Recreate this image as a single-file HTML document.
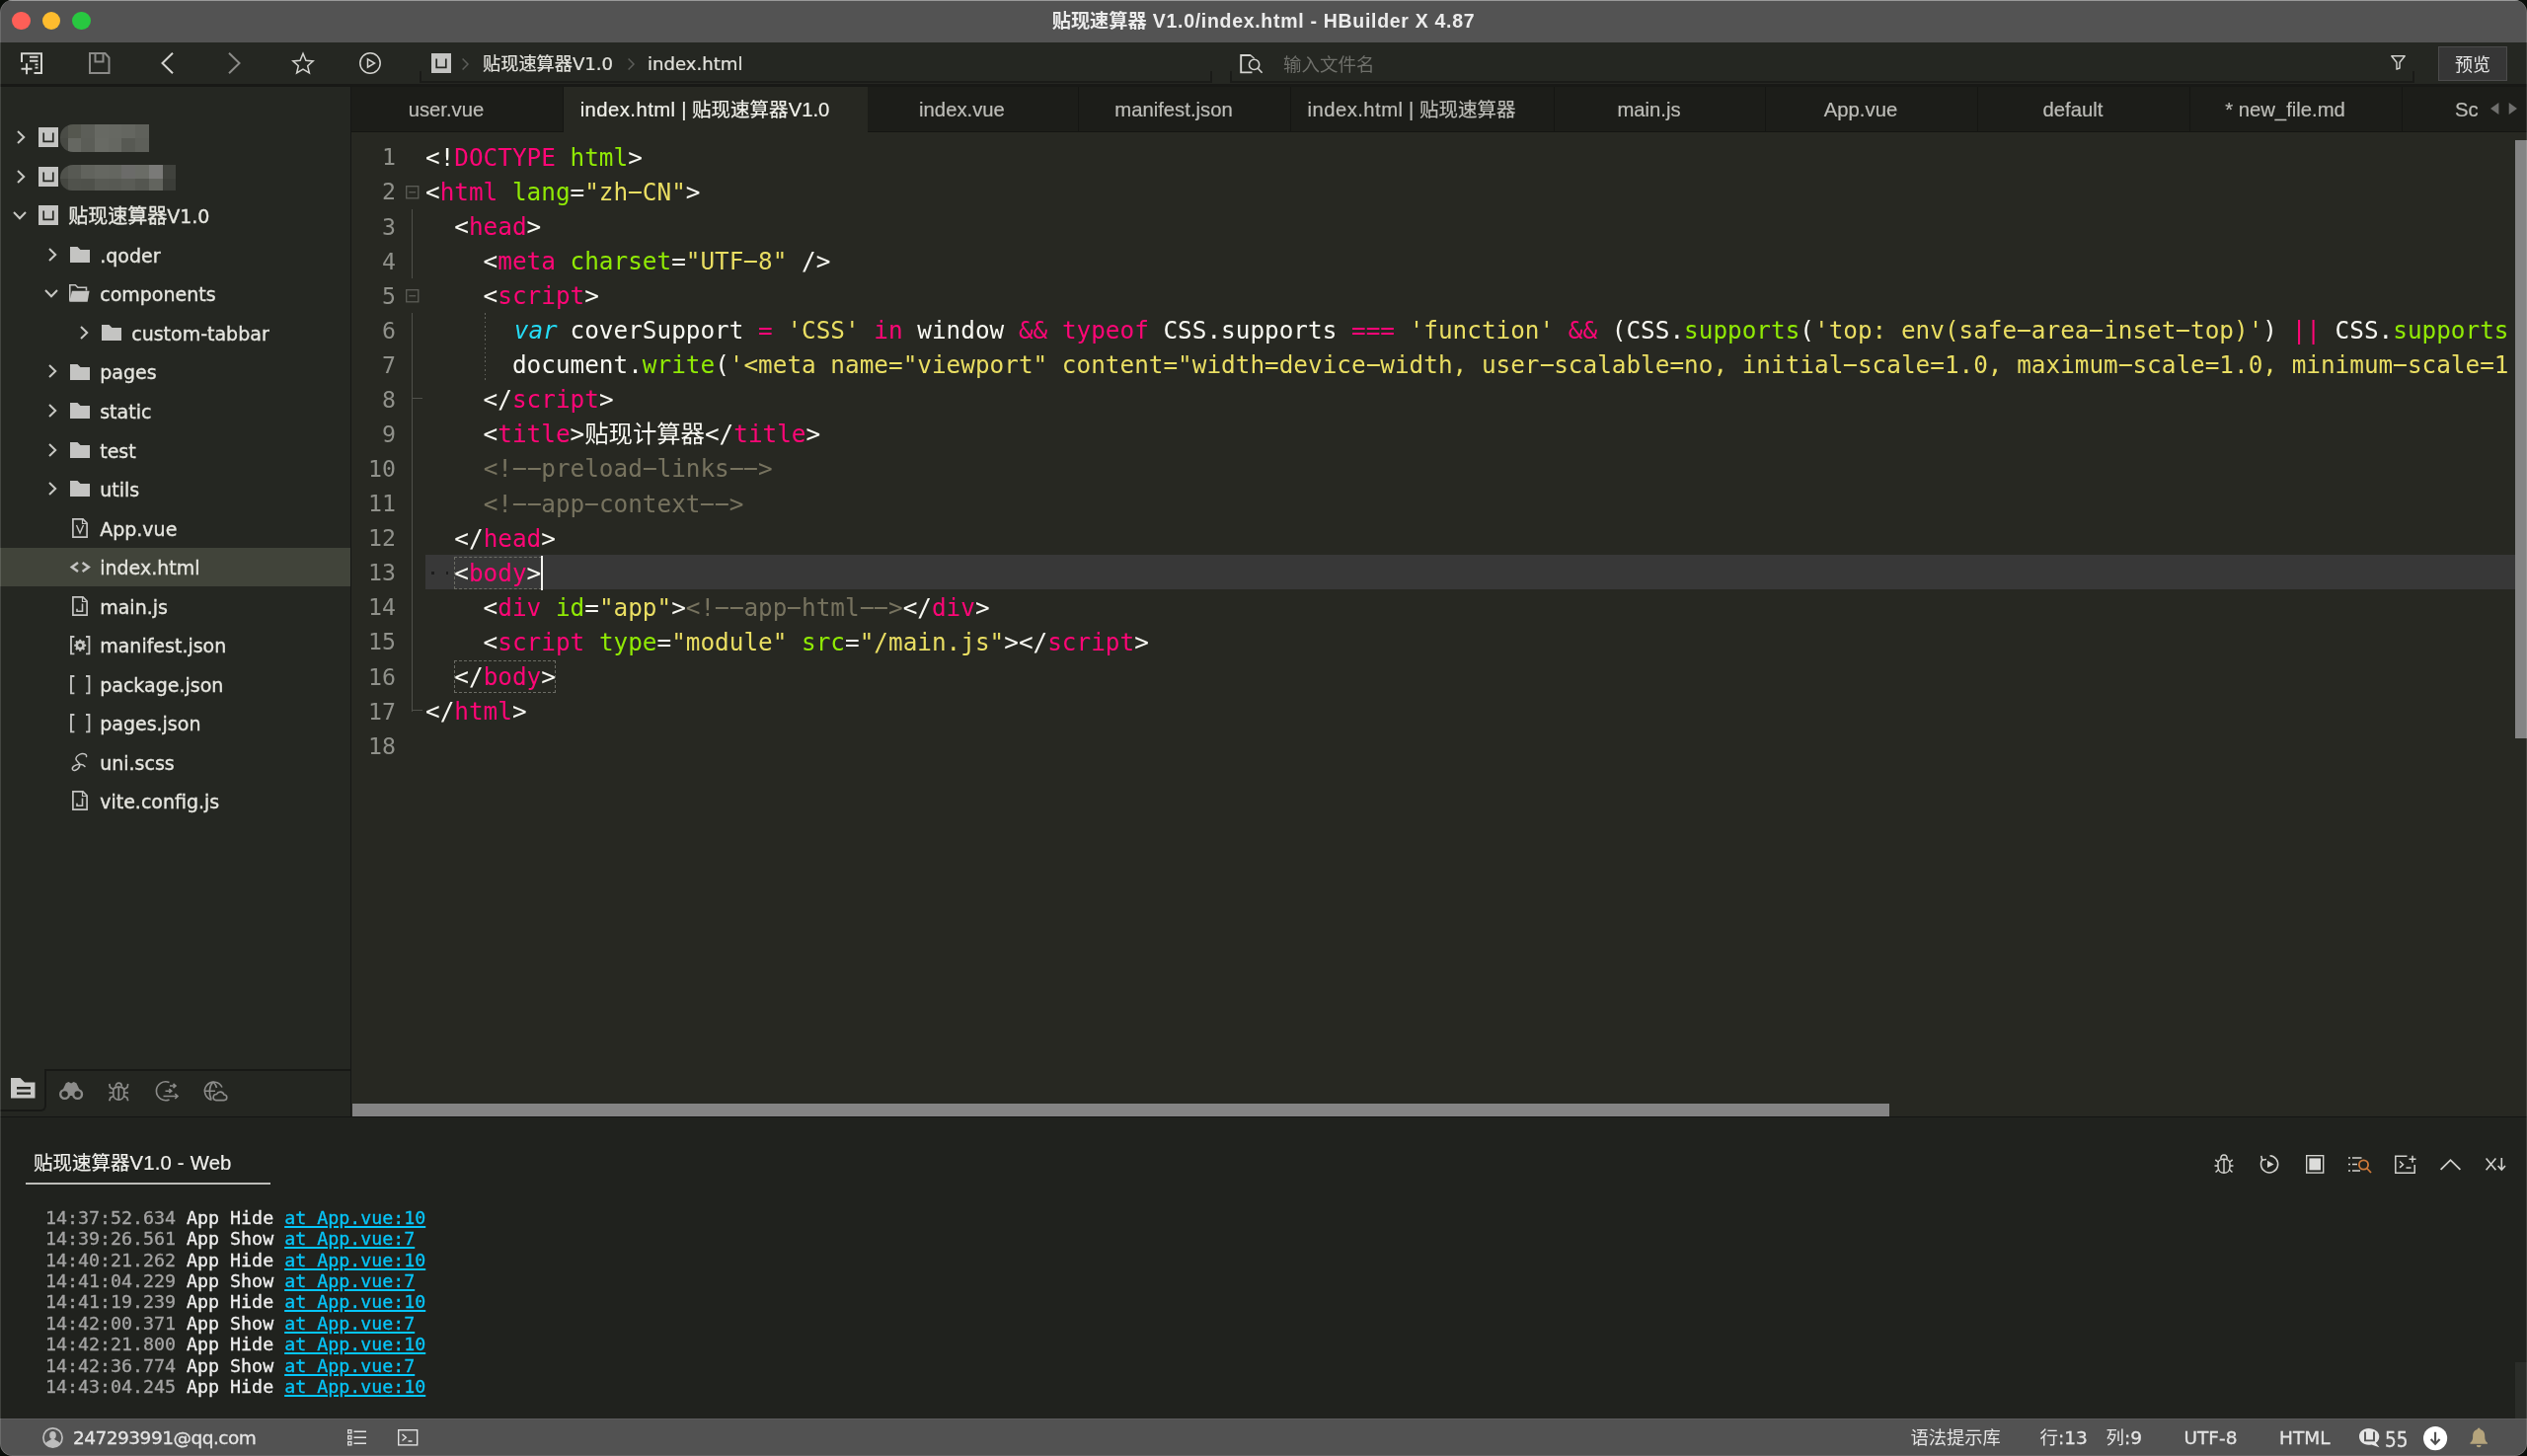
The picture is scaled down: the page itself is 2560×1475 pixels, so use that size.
<!DOCTYPE html>
<html lang="zh-CN"><head><meta charset="utf-8"><title>HBuilder X</title>
<style>
*{box-sizing:border-box;margin:0;padding:0}
html,body{width:2560px;height:1475px;overflow:hidden;background:#0b0f0b}
body{position:relative;font-family:"DejaVu Sans","Noto Sans CJK SC",sans-serif;color:#d8d8d2;-webkit-font-smoothing:antialiased}
.abs{position:absolute}
#win{position:absolute;left:0;top:0;width:2560px;height:1475px;border-radius:12.5px;overflow:hidden;background:#272822;will-change:transform}
#title{position:absolute;left:0;top:0;width:2560px;height:43px;background:#535353;border-top:1.5px solid #9a9a9a}
#title .t{position:absolute;left:0;width:2560px;top:7px;text-align:center;font:bold 19.5px/26px "Liberation Sans","Noto Sans CJK SC",sans-serif;color:#ececec;letter-spacing:0.7px;white-space:pre}
.tl{position:absolute;top:10.7px;width:18.6px;height:18.6px;border-radius:50%}
#toolbar{position:absolute;left:0;top:43px;width:2560px;height:42px;background:#252722}
#tbline{position:absolute;left:0;top:85px;width:2560px;height:3px;background:#181916}
#sidebar{position:absolute;left:0;top:88px;width:355px;height:1043px;background:#252722}
#sidesep{position:absolute;left:355px;top:88px;width:2px;height:1043px;background:linear-gradient(to right,#161716 1px,#21221e 1px)}
#tabs{position:absolute;left:356px;top:88px;width:2204px;height:46px;background:#1c1d19}
.tab{position:absolute;top:0;height:46px;border-right:1.5px solid #151613;border-bottom:1.5px solid #151613;font:20.3px/46px "Liberation Sans","Noto Sans CJK SC",sans-serif;color:#bdbdb8;text-align:center;white-space:pre;padding-right:22px;-webkit-text-stroke:.2px}
.tab .z{font-size:19.5px}
.tab.act{background:#272822;border:none;color:#f0f0ea;height:46px}
#editor{position:absolute;left:356px;top:134px;width:2204px;height:997px;background:#272822;overflow:hidden}
.ln{position:absolute;left:0;width:45px;text-align:right;font:23.2px/35px "DejaVu Sans Mono",monospace;color:#90918b;height:35px;margin-top:-.4px}
.cl{position:absolute;left:75px;height:35px;font:24.355px/35px "DejaVu Sans Mono","Noto Sans CJK SC",monospace;color:#f8f8f2;white-space:pre}
.k{color:#ff0677}.a{color:#90ea05}.s{color:#eade62}.c{color:#77735f}.v{color:#25dcf6;font-style:italic;position:relative;left:1.8px}
.h{display:inline-block;transform:translateY(-.6px) scaleX(2.1)}
#console{position:absolute;left:0;top:1131px;width:2560px;height:306px;background:#20221e;box-shadow:inset 0 1px 0 #141514}
.cline{position:absolute;left:46px;height:22px;font:18.3px/22px "DejaVu Sans Mono",monospace;white-space:pre;color:#f0f0f0;-webkit-text-stroke:.3px}
.cline .ts{color:#a4a4a4}.cline .lk{color:#06c6fa;text-decoration:underline;text-decoration-thickness:1.5px;text-underline-offset:2.4px}
#status{position:absolute;left:0;top:1437px;width:2560px;height:38px;background:#525252;box-shadow:inset 0 1px 0 #5c5c5c;font:18.5px/38px "DejaVu Sans","Noto Sans CJK SC",sans-serif;color:#e4e4e4}
#status span{position:absolute;top:.8px;white-space:pre;-webkit-text-stroke:.3px #e4e4e4}
.row{position:absolute;left:0;width:355px;height:39px}
.row .tx{position:absolute;top:1.5px;margin-left:-1.3px;font:19px/39px "DejaVu Sans","Noto Sans CJK SC",sans-serif;color:#e6e6e0;white-space:pre;-webkit-text-stroke:0.35px #e6e6e0}
.row .cj{font-size:20px}
.row.sel{background:#41443a}
svg{position:absolute;overflow:visible}
#frame{position:absolute;left:0;top:0;width:2560px;height:1475px;border-radius:12.5px;box-shadow:inset 1px 0 0 rgba(255,255,255,.14),inset -1px 0 0 rgba(255,255,255,.14),inset 0 -1px 0 rgba(255,255,255,.10);pointer-events:none}
</style></head>
<body><div id="win">
<div id="title"><div class="tl" style="left:12px;background:#fe5f57"></div><div class="tl" style="left:42.6px;background:#febc2e"></div><div class="tl" style="left:73px;background:#28c840"></div><div class="t"><span style="font-size:19.2px;letter-spacing:0">贴现速算器</span> V1.0/index.html - HBuilder X 4.87</div></div>
<div id="toolbar"><div class="abs" style="left:0;top:0;width:2560px;height:42px">
<svg style="left:21px;top:10px" width="22" height="22" viewBox="0 0 22 22" fill="none" stroke="#d4d4d0" stroke-width="2"><path d="M1 10V1.2H21V21H13.5"/><path d="M9 4.8H17.5M9 8.8H17.5" stroke-width="2"/><path d="M14.5 12.3H17.5M14.5 15.6H17.5" stroke-width="1.8"/><path d="M0.5 16.8H11.5M6 11.3V22.3" stroke-width="1.9"/></svg>
<svg style="left:90px;top:10px" width="22" height="22" viewBox="0 0 22 22" fill="none" stroke="#8b8b88" stroke-width="2"><path d="M1 1H16.5L20.5 5.5V21H1Z"/><path d="M6.5 1V9.5H14.5V1"/></svg>
<svg style="left:163px;top:10px" width="13" height="22" viewBox="0 0 13 22" fill="none" stroke="#d4d4d0" stroke-width="2"><path d="M12 0.8L1.5 11L12 21.2"/></svg>
<svg style="left:231px;top:10px" width="13" height="22" viewBox="0 0 13 22" fill="none" stroke="#8b8b88" stroke-width="2"><path d="M1 0.8L11.5 11L1 21.2"/></svg>
<svg style="left:295.7px;top:9.6px" width="22" height="22" viewBox="0 0 22 22" fill="none" stroke="#d4d4d0" stroke-width="1.5" stroke-linejoin="miter"><path d="M11 1.3L13.9 8.2L21.2 8.9L15.7 13.8L17.4 21L11 17.2L4.6 21L6.3 13.8L0.8 8.9L8.1 8.2Z"/></svg>
<svg style="left:363.8px;top:10px" width="22" height="22" viewBox="0 0 22 22" fill="none" stroke="#d4d4d0" stroke-width="1.5"><circle cx="11" cy="11" r="10.2"/><path d="M8.5 6.8L15.5 11L8.5 15.2Z"/></svg>
<div class="abs" style="left:425px;top:29px;width:803px;height:12px;border:2px solid #1a1b18;border-top:none"></div>
<svg style="left:436.5px;top:11px" width="20" height="20" viewBox="0 0 20 20"><rect width="20" height="20" fill="#c4c4c2"/><path d="M5.2 5.5V14.4H14.8V5.5" fill="none" stroke="#252722" stroke-width="1.7"/></svg>
<svg style="left:468px;top:16px" width="7" height="12" viewBox="0 0 7 12" fill="none" stroke="#5c5d59" stroke-width="1.5"><path d="M0.6 0.5L6 6L0.6 11.5"/></svg>
<div class="abs" style="left:489px;top:1px;font:18.1px/42px 'DejaVu Sans','Noto Sans CJK SC',sans-serif;color:#e2e2dc;white-space:pre;-webkit-text-stroke:.2px #e2e2dc"><span style="font-size:18.2px">贴现速算器</span>V1.0</div>
<svg style="left:636px;top:16px" width="7" height="12" viewBox="0 0 7 12" fill="none" stroke="#5c5d59" stroke-width="1.5"><path d="M0.6 0.5L6 6L0.6 11.5"/></svg>
<div class="abs" style="left:656px;top:1px;font:18.1px/42px 'DejaVu Sans',sans-serif;color:#e2e2dc;white-space:pre;-webkit-text-stroke:.2px #e2e2dc">index.html</div>
<div class="abs" style="left:1246px;top:29px;width:1200px;height:12px;border:2px solid #1a1b18;border-top:none"></div>
<svg style="left:1256px;top:12px" width="23" height="20" viewBox="0 0 23 20" fill="none" stroke="#d4d4d0" stroke-width="1.9"><path d="M10.8 1H1.2V18.4H12.5"/><path d="M10.3 0.6L14.6 4.2" stroke-width="1.3"/><circle cx="14.6" cy="10.4" r="5.1" stroke-width="1.6"/><path d="M18.3 14.3L22.6 18.8" stroke-width="1.6"/></svg>
<div class="abs" style="left:1300px;top:0.4px;font:18.5px/42px 'Noto Sans CJK SC',sans-serif;color:#6f706b;white-space:pre">输入文件名</div>
<svg style="left:2422px;top:13px" width="15" height="15" viewBox="0 0 15 15" fill="none" stroke="#d4d4d0" stroke-width="1.4" stroke-linejoin="round"><path d="M0.8 0.8H14.2L9 7.2V13L6 14.2V7.2Z"/></svg>
<div class="abs" style="left:2470px;top:4px;width:70px;height:35px;background:#363636;border:1px solid #4b4b4b;text-align:center;font:18px/33px 'Noto Sans CJK SC',sans-serif;color:#e6e6e6">预览</div>
</div></div><div id="tbline"></div>
<div id="sidebar">
<div class="row" style="top:31.6px">
<svg style="left:17px;top:12.5px" width="9" height="14" viewBox="0 0 9 14" fill="none" stroke="#c8c8c4" stroke-width="2"><path d="M1 1L7.2 7L1 13"/></svg>
<svg style="left:38.5px;top:9.5px" width="20" height="20" viewBox="0 0 20 20"><rect width="20" height="20" fill="#c4c4c2"/><path d="M5.2 5.5V14.4H14.8V5.5" fill="none" stroke="#252722" stroke-width="1.7"/></svg>
<div class="abs" style="left:60.9px;top:6.5px;width:90.2px;height:13.8px;border-radius:13px 0 0 0;background:linear-gradient(to right,#4a4c46 0.0px 7.7px,#55574f 7.7px 21.2px,#5c5e58 21.2px 34.7px,#676963 34.7px 48.7px,#666862 48.7px 62.5px,#646660 62.5px 76.0px,#5f615b 76.0px 90.2px);filter:blur(.6px)"></div><div class="abs" style="left:60.9px;top:20.3px;width:90.2px;height:14.1px;border-radius:0 0 0 13px;background:linear-gradient(to right,#474943 0.0px 7.7px,#656761 7.7px 21.2px,#5b5d57 21.2px 34.7px,#686a64 34.7px 48.7px,#656761 48.7px 62.5px,#575953 62.5px 76.0px,#5d5f59 76.0px 90.2px);filter:blur(.6px)"></div>
</div>
<div class="row" style="top:71.1px">
<svg style="left:17px;top:12.5px" width="9" height="14" viewBox="0 0 9 14" fill="none" stroke="#c8c8c4" stroke-width="2"><path d="M1 1L7.2 7L1 13"/></svg>
<svg style="left:38.5px;top:9.5px" width="20" height="20" viewBox="0 0 20 20"><rect width="20" height="20" fill="#c4c4c2"/><path d="M5.2 5.5V14.4H14.8V5.5" fill="none" stroke="#252722" stroke-width="1.7"/></svg>
<div class="abs" style="left:60.5px;top:8.4px;width:117.1px;height:13.8px;border-radius:13px 0 0 0;background:linear-gradient(to right,#50524c 0.0px 7.7px,#575953 7.7px 21.2px,#61635d 21.2px 34.7px,#656761 34.7px 48.7px,#646660 48.7px 62.5px,#6b6b69 62.5px 76.0px,#6a6c66 76.0px 90.2px,#7a7a78 90.2px 103.7px,#40423d 103.7px 117.1px);filter:blur(.6px)"></div><div class="abs" style="left:60.5px;top:22.2px;width:117.1px;height:12.1px;border-radius:0 0 0 13px;background:linear-gradient(to right,#454741 0.0px 7.7px,#50524c 7.7px 21.2px,#4f514b 21.2px 34.7px,#585a54 34.7px 48.7px,#575953 48.7px 62.5px,#5a5c56 62.5px 76.0px,#545650 76.0px 90.2px,#62645e 90.2px 103.7px,#3b3d38 103.7px 117.1px);filter:blur(.6px)"></div>
</div>
<div class="row" style="top:110.7px">
<svg style="left:13px;top:15.5px" width="14" height="9" viewBox="0 0 14 9" fill="none" stroke="#c8c8c4" stroke-width="2"><path d="M1 1L7 7.2L13 1"/></svg>
<svg style="left:38.5px;top:9.5px" width="20" height="20" viewBox="0 0 20 20"><rect width="20" height="20" fill="#c4c4c2"/><path d="M5.2 5.5V14.4H14.8V5.5" fill="none" stroke="#252722" stroke-width="1.7"/></svg>
<div class="tx" style="left:70.5px"><span class="cj">贴现速算器</span>V1.0</div>
</div>
<div class="row" style="top:150.2px">
<svg style="left:49px;top:12.5px" width="9" height="14" viewBox="0 0 9 14" fill="none" stroke="#c8c8c4" stroke-width="2"><path d="M1 1L7.2 7L1 13"/></svg>
<svg style="left:70.5px;top:11.8px" width="20" height="16" viewBox="0 0 20 16"><path d="M0 0H7.5L10.5 3H20V16H0Z" fill="#c4c4c2"/></svg>
<div class="tx" style="left:102.5px">.qoder</div>
</div>
<div class="row" style="top:189.8px">
<svg style="left:45px;top:15.5px" width="14" height="9" viewBox="0 0 14 9" fill="none" stroke="#c8c8c4" stroke-width="2"><path d="M1 1L7 7.2L13 1"/></svg>
<svg style="left:69.7px;top:10.2px" width="20.6" height="17.7" viewBox="0 0 21 18"><path d="M0.8 17V0.8H6.5L9 3.3H17.8V6.5" fill="none" stroke="#c4c4c2" stroke-width="1.6"/><path d="M3 6.8H21L19 18H0.3Z" fill="#c4c4c2"/></svg>
<div class="tx" style="left:102.5px">components</div>
</div>
<div class="row" style="top:229.3px">
<svg style="left:81px;top:12.5px" width="9" height="14" viewBox="0 0 9 14" fill="none" stroke="#c8c8c4" stroke-width="2"><path d="M1 1L7.2 7L1 13"/></svg>
<svg style="left:102.5px;top:11.8px" width="20" height="16" viewBox="0 0 20 16"><path d="M0 0H7.5L10.5 3H20V16H0Z" fill="#c4c4c2"/></svg>
<div class="tx" style="left:134.5px">custom-tabbar</div>
</div>
<div class="row" style="top:268.9px">
<svg style="left:49px;top:12.5px" width="9" height="14" viewBox="0 0 9 14" fill="none" stroke="#c8c8c4" stroke-width="2"><path d="M1 1L7.2 7L1 13"/></svg>
<svg style="left:70.5px;top:11.8px" width="20" height="16" viewBox="0 0 20 16"><path d="M0 0H7.5L10.5 3H20V16H0Z" fill="#c4c4c2"/></svg>
<div class="tx" style="left:102.5px">pages</div>
</div>
<div class="row" style="top:308.4px">
<svg style="left:49px;top:12.5px" width="9" height="14" viewBox="0 0 9 14" fill="none" stroke="#c8c8c4" stroke-width="2"><path d="M1 1L7.2 7L1 13"/></svg>
<svg style="left:70.5px;top:11.8px" width="20" height="16" viewBox="0 0 20 16"><path d="M0 0H7.5L10.5 3H20V16H0Z" fill="#c4c4c2"/></svg>
<div class="tx" style="left:102.5px">static</div>
</div>
<div class="row" style="top:348.0px">
<svg style="left:49px;top:12.5px" width="9" height="14" viewBox="0 0 9 14" fill="none" stroke="#c8c8c4" stroke-width="2"><path d="M1 1L7.2 7L1 13"/></svg>
<svg style="left:70.5px;top:11.8px" width="20" height="16" viewBox="0 0 20 16"><path d="M0 0H7.5L10.5 3H20V16H0Z" fill="#c4c4c2"/></svg>
<div class="tx" style="left:102.5px">test</div>
</div>
<div class="row" style="top:387.5px">
<svg style="left:49px;top:12.5px" width="9" height="14" viewBox="0 0 9 14" fill="none" stroke="#c8c8c4" stroke-width="2"><path d="M1 1L7.2 7L1 13"/></svg>
<svg style="left:70.5px;top:11.8px" width="20" height="16" viewBox="0 0 20 16"><path d="M0 0H7.5L10.5 3H20V16H0Z" fill="#c4c4c2"/></svg>
<div class="tx" style="left:102.5px">utils</div>
</div>
<div class="row" style="top:427.1px">
<svg style="left:73.0px;top:9.5px" width="16" height="20" viewBox="0 0 16 20" fill="none" stroke="#c4c4c2" stroke-width="1.7"><path d="M0.9 0.9H11L15.1 5V19.1H0.9Z"/><path d="M10.5 1V5.5H15" stroke-width="1.2"/><path d="M4.5 7L8 15L11.5 7" stroke-width="1.4"/></svg>
<div class="tx" style="left:102.5px">App.vue</div>
</div>
<div class="row sel" style="top:466.6px">
<svg style="left:70.5px;top:14.0px" width="21" height="11" viewBox="0 0 21 11" fill="none" stroke="#c4c4c2" stroke-width="2.5"><path d="M8 1L1.8 5.5L8 10M12.6 1L18.8 5.5L12.6 10"/></svg>
<div class="tx" style="left:102.5px">index.html</div>
</div>
<div class="row" style="top:506.2px">
<svg style="left:73.0px;top:9.5px" width="16" height="20" viewBox="0 0 16 20" fill="none" stroke="#c4c4c2" stroke-width="1.7"><path d="M0.9 0.9H11L15.1 5V19.1H0.9Z"/><path d="M10.5 1V5.5H15" stroke-width="1.2"/><path d="M10.5 7.5V15.2H5V12.8" stroke-width="1.6"/></svg>
<div class="tx" style="left:102.5px">main.js</div>
</div>
<div class="row" style="top:545.8px">
<svg style="left:70.5px;top:10.5px" width="20.4" height="19.4" viewBox="0 0 21 20" fill="none" stroke="#c4c4c2" stroke-width="1.9"><path d="M4.5 1H1V19H4.5M16.5 1H20V19H16.5"/><circle cx="10.5" cy="10" r="3.5" fill="none" stroke="#c4c4c2" stroke-width="2.8"/><g stroke="#c4c4c2" stroke-width="2.2"><path d="M10.5 3.8V6M10.5 14V16.2M4.3 10H6.5M14.5 10H16.7M6.1 5.6L7.7 7.2M13.3 12.8L14.9 14.4M14.9 5.6L13.3 7.2M6.1 14.4L7.7 12.8"/></g></svg>
<div class="tx" style="left:102.5px">manifest.json</div>
</div>
<div class="row" style="top:585.3px">
<svg style="left:70.5px;top:10.5px" width="20.4" height="19.4" viewBox="0 0 21 20" fill="none" stroke="#c4c4c2" stroke-width="1.9"><path d="M4.5 1H1V19H4.5M16.5 1H20V19H16.5"/></svg>
<div class="tx" style="left:102.5px">package.json</div>
</div>
<div class="row" style="top:624.9px">
<svg style="left:70.5px;top:10.5px" width="20.4" height="19.4" viewBox="0 0 21 20" fill="none" stroke="#c4c4c2" stroke-width="1.9"><path d="M4.5 1H1V19H4.5M16.5 1H20V19H16.5"/></svg>
<div class="tx" style="left:102.5px">pages.json</div>
</div>
<div class="row" style="top:664.4px">
<svg style="left:70.5px;top:9.5px" width="20" height="20" viewBox="0 0 20 20" fill="none" stroke="#c4c4c2" stroke-width="1.5" stroke-linecap="round"><path d="M16.5 4.5C17.5 1.5 12 0.5 8.5 3C5.5 5 5 7.5 7.5 9.5C10 11.5 10.5 13 9 15.5C7.5 18 3.5 19.5 2.5 17.5C1.5 15.5 5 12.5 9.5 12.2C12.5 12 14 13 15 14.5"/></svg>
<div class="tx" style="left:102.5px">uni.scss</div>
</div>
<div class="row" style="top:703.9px">
<svg style="left:73.0px;top:9.5px" width="16" height="20" viewBox="0 0 16 20" fill="none" stroke="#c4c4c2" stroke-width="1.7"><path d="M0.9 0.9H11L15.1 5V19.1H0.9Z"/><path d="M10.5 1V5.5H15" stroke-width="1.2"/><path d="M10.5 7.5V15.2H5V12.8" stroke-width="1.6"/></svg>
<div class="tx" style="left:102.5px">vite.config.js</div>
</div>
<div class="abs" style="left:0;top:995px;width:355px;height:2px;background:#181916"></div>
<div class="abs" style="left:0;top:997px;width:355px;height:46px;background:#242621"></div>
<div class="abs" style="left:0;top:995px;width:47px;height:43px;background:#252722;border-right:2px solid #181916;border-bottom:2px solid #181916;border-radius:0 0 6px 0"></div>
</div><div id="sidesep"></div>
<div id="tabs">
<div class="tab" style="left:0px;width:215px">user.vue</div>
<div class="tab act" style="left:215px;width:308px"><span style="letter-spacing:.45px">index.html</span> | <span class="z">贴现速算器</span>V1.0</div>
<div class="tab" style="left:523px;width:214px">index.vue</div>
<div class="tab" style="left:737px;width:215px">manifest.json</div>
<div class="tab" style="left:952px;width:267px"><span style="letter-spacing:.45px">index.html</span> | <span class="z">贴现速算器</span></div>
<div class="tab" style="left:1219px;width:214px">main.js</div>
<div class="tab" style="left:1433px;width:215px">App.vue</div>
<div class="tab" style="left:1648px;width:215px">default</div>
<div class="tab" style="left:1863px;width:215px">* new_file.md</div>
<div class="tab" style="left:2078px;width:126px;border-right:none;text-align:left;padding-left:53px">Sc</div>
<svg style="left:2167px;top:15.5px" width="28" height="12" viewBox="0 0 28 12"><path d="M8.4 0V12L0 6Z M18.7 0V12L27 6Z" fill="#6f6f6d"/></svg>
</div>
<div id="editor">
<div class="abs" style="left:75px;top:428.0px;width:2117px;height:35px;background:#383838"></div>
<div class="abs" style="left:61px;top:77.9px;width:1px;height:70.1px;background:#4f504a"></div>
<div class="abs" style="left:61px;top:183.1px;width:1px;height:403.9px;background:#4f504a"></div>
<div class="abs" style="left:61px;top:269.4px;width:10.5px;height:1px;background:#4f504a"></div>
<div class="abs" style="left:61px;top:585.1px;width:10.5px;height:1px;background:#4f504a"></div>
<svg style="left:55px;top:53.5px" width="13.5" height="13.5" viewBox="0 0 13.5 13.5" fill="#272822" stroke="#5d5e58" stroke-width="1.3"><rect x="0.7" y="0.7" width="12.1" height="12.1"/><path d="M3.3 6.75H10.2"/></svg>
<svg style="left:55px;top:158.7px" width="13.5" height="13.5" viewBox="0 0 13.5 13.5" fill="#272822" stroke="#5d5e58" stroke-width="1.3"><rect x="0.7" y="0.7" width="12.1" height="12.1"/><path d="M3.3 6.75H10.2"/></svg>
<div class="abs" style="left:134.9px;top:183.1px;width:1.4px;height:69.2px;background:repeating-linear-gradient(to bottom,#63645e 0 1.6px,transparent 1.6px 4.4px)"></div>
<div class="ln" style="top:7.7px">1</div>
<div class="cl" style="top:7.7px">&lt;!<span class="k">DOCTYPE</span> <span class="a">html</span>&gt;</div>
<div class="ln" style="top:42.8px">2</div>
<div class="cl" style="top:42.8px">&lt;<span class="k">html</span> <span class="a">lang</span>=<span class="s">"zh<span class="h">-</span>CN"</span>&gt;</div>
<div class="ln" style="top:77.9px">3</div>
<div class="cl" style="top:77.9px">  &lt;<span class="k">head</span>&gt;</div>
<div class="ln" style="top:112.9px">4</div>
<div class="cl" style="top:112.9px">    &lt;<span class="k">meta</span> <span class="a">charset</span>=<span class="s">"UTF<span class="h">-</span>8"</span> /&gt;</div>
<div class="ln" style="top:148.0px">5</div>
<div class="cl" style="top:148.0px">    &lt;<span class="k">script</span>&gt;</div>
<div class="ln" style="top:183.1px">6</div>
<div class="cl" style="top:183.1px">      <span class="v">var</span> coverSupport <span class="k">=</span> <span class="s">'CSS'</span> <span class="k">in</span> window <span class="k">&amp;&amp;</span> <span class="k">typeof</span> CSS.supports <span class="k">===</span> <span class="s">'function'</span> <span class="k">&amp;&amp;</span> (CSS.<span class="a">supports</span>(<span class="s">'top: env(safe<span class="h">-</span>area<span class="h">-</span>inset<span class="h">-</span>top)'</span>) <span class="k">||</span> CSS.<span class="a">supports</span></div>
<div class="ln" style="top:218.2px">7</div>
<div class="cl" style="top:218.2px">      document.<span class="a">write</span>(<span class="s">'&lt;meta name="viewport" content="width=device<span class="h">-</span>width, user<span class="h">-</span>scalable=no, initial<span class="h">-</span>scale=1.0, maximum<span class="h">-</span>scale=1.0, minimum<span class="h">-</span>scale=1</span></div>
<div class="ln" style="top:253.3px">8</div>
<div class="cl" style="top:253.3px">    &lt;/<span class="k">script</span>&gt;</div>
<div class="ln" style="top:288.3px">9</div>
<div class="cl" style="top:288.3px">    &lt;<span class="k">title</span>&gt;<span class="zh">贴现计算器</span>&lt;/<span class="k">title</span>&gt;</div>
<div class="ln" style="top:323.4px">10</div>
<div class="cl" style="top:323.4px">    <span class="c">&lt;!<span class="h">-</span><span class="h">-</span>preload<span class="h">-</span>links<span class="h">-</span><span class="h">-</span>&gt;</span></div>
<div class="ln" style="top:358.5px">11</div>
<div class="cl" style="top:358.5px">    <span class="c">&lt;!<span class="h">-</span><span class="h">-</span>app<span class="h">-</span>context<span class="h">-</span><span class="h">-</span>&gt;</span></div>
<div class="ln" style="top:393.6px">12</div>
<div class="cl" style="top:393.6px">  &lt;/<span class="k">head</span>&gt;</div>
<div class="ln" style="top:428.7px">13</div>
<div class="cl" style="top:428.7px">  &lt;<span class="k">body</span>&gt;</div>
<div class="ln" style="top:463.7px">14</div>
<div class="cl" style="top:463.7px">    &lt;<span class="k">div</span> <span class="a">id</span>=<span class="s">"app"</span>&gt;<span class="c">&lt;!<span class="h">-</span><span class="h">-</span>app<span class="h">-</span>html<span class="h">-</span><span class="h">-</span>&gt;</span>&lt;/<span class="k">div</span>&gt;</div>
<div class="ln" style="top:498.8px">15</div>
<div class="cl" style="top:498.8px">    &lt;<span class="k">script</span> <span class="a">type</span>=<span class="s">"module"</span> <span class="a">src</span>=<span class="s">"/main.js"</span>&gt;&lt;/<span class="k">script</span>&gt;</div>
<div class="ln" style="top:533.9px">16</div>
<div class="cl" style="top:533.9px">  &lt;/<span class="k">body</span>&gt;</div>
<div class="ln" style="top:569.0px">17</div>
<div class="cl" style="top:569.0px">&lt;/<span class="k">html</span>&gt;</div>
<div class="ln" style="top:604.1px">18</div>
<div class="abs" style="left:104.3px;top:430.2px;width:88.5px;height:33px;border:1px dashed #6a6b64"></div>
<div class="abs" style="left:191.8px;top:428.7px;width:2.5px;height:35px;background:#f4f4f0"></div>
<div class="abs" style="left:80.9px;top:445.0px;width:2.7px;height:2.7px;background:#1d1d1d"></div>
<div class="abs" style="left:95.6px;top:445.0px;width:2.7px;height:2.7px;background:#1d1d1d"></div>
<div class="abs" style="left:104.3px;top:535.4px;width:103.1px;height:33px;border:1px dashed #6a6b64"></div>
<div class="abs" style="left:2192px;top:8px;width:12px;height:606px;background:#848484"></div>
<div class="abs" style="left:1px;top:984px;width:1557px;height:13px;background:#848484"></div>
</div>
<div id="console">
<div class="abs" style="left:34px;top:27px;font:20.3px/40px 'Liberation Sans','Noto Sans CJK SC',sans-serif;color:#f0f0ec;white-space:pre;letter-spacing:.2px;-webkit-text-stroke:.2px"><span style="font-size:19.5px;letter-spacing:0">贴现速算器</span>V1.0 - Web</div>
<div class="abs" style="left:26px;top:66.7px;width:248px;height:2px;background:#bdbdb9"></div>
<div class="cline" style="top:91.9px"><span class="ts">14:37:52.634</span> App Hide <span class="lk">at App.vue:10</span></div>
<div class="cline" style="top:113.3px"><span class="ts">14:39:26.561</span> App Show <span class="lk">at App.vue:7</span></div>
<div class="cline" style="top:134.6px"><span class="ts">14:40:21.262</span> App Hide <span class="lk">at App.vue:10</span></div>
<div class="cline" style="top:156.0px"><span class="ts">14:41:04.229</span> App Show <span class="lk">at App.vue:7</span></div>
<div class="cline" style="top:177.4px"><span class="ts">14:41:19.239</span> App Hide <span class="lk">at App.vue:10</span></div>
<div class="cline" style="top:198.8px"><span class="ts">14:42:00.371</span> App Show <span class="lk">at App.vue:7</span></div>
<div class="cline" style="top:220.1px"><span class="ts">14:42:21.800</span> App Hide <span class="lk">at App.vue:10</span></div>
<div class="cline" style="top:241.5px"><span class="ts">14:42:36.774</span> App Show <span class="lk">at App.vue:7</span></div>
<div class="cline" style="top:262.9px"><span class="ts">14:43:04.245</span> App Hide <span class="lk">at App.vue:10</span></div>
<svg style="left:2243px;top:37.8px" width="20" height="20.2" viewBox="0 0 20 20.2" fill="none" stroke="#d2d2ce" stroke-width="1.5"><path d="M4 9.5C4 4 16 4 16 9.5V13C16 21.5 4 21.5 4 13Z"/><path d="M10 5.8V19"/><path d="M6.8 5.2C6.8 -0.3 13.2 -0.3 13.2 5.2"/><path d="M4 8L1.3 5.8M4 12H0.5M4.3 16L1.5 18.5M16 8L18.7 5.8M16 12H19.5M15.7 16L18.5 18.5"/></svg>
<svg style="left:2290px;top:39.2px" width="19" height="18.8" viewBox="0 0 19 18.8" fill="none" stroke="#d2d2ce" stroke-width="1.5"><path d="M2.2 4.2A8.6 8.6 0 1 0 9.5 0.8"/><path d="M0.8 0.8L1.6 5.2L6 4.6"/><path d="M7 5.7L13.6 9.4L7 13.1Z" fill="#d2d2ce" stroke="none"/></svg>
<svg style="left:2336px;top:39.2px" width="18.4" height="18.8" viewBox="0 0 18.4 18.8"><rect x="0.7" y="0.7" width="17" height="17.4" fill="none" stroke="#d2d2ce" stroke-width="1.4"/><rect x="3.4" y="3.4" width="11.6" height="12" fill="#dcdcda"/></svg>
<svg style="left:2378.8px;top:40.5px" width="23.5" height="17" viewBox="0 0 23.5 17" fill="none" stroke="#d2d2ce" stroke-width="1.5"><path d="M0 1H2M4 1H13.5M0 7.5H2M4 7.5H9M0 14H2M4 14H12"/><circle cx="15.5" cy="8" r="4.6" stroke="#d07a3a" stroke-width="1.8"/><path d="M18.8 11.5L23 16" stroke="#d07a3a" stroke-width="1.8"/></svg>
<svg style="left:2425.9px;top:39.0px" width="21.5" height="19" viewBox="0 0 21.5 19" fill="none" stroke="#d2d2ce" stroke-width="1.5"><path d="M12.5 1.2H0.8V18.2H20.2V10"/><path d="M5 6.5L8.5 9.7L5 12.9M11.5 13H16.5"/><path d="M14.5 4.2H21.5M18 0.7V7.7"/></svg>
<svg style="left:2471.9px;top:43.0px" width="21" height="11.3" viewBox="0 0 21 11.3" fill="none" stroke="#d2d2ce" stroke-width="1.8"><path d="M0.6 10.8L10.5 1.2L20.4 10.8"/></svg>
<svg style="left:2517.6px;top:41.9px" width="20.6" height="12.8" viewBox="0 0 20.6 12.8" fill="none" stroke="#d2d2ce" stroke-width="1.6"><path d="M0.6 0.5L10.4 12.3M10.4 0.5L0.6 12.3"/><path d="M16.3 0V12M12.6 8L16.3 12L20 8"/></svg>
<div class="abs" style="left:2548px;top:249px;width:12px;height:57px;background:#2b2d29"></div>
</div>
<svg style="left:10.8px;top:1092.4px" width="24.5" height="20.6" viewBox="0 0 24.5 20.6"><path d="M0 0H9.5L14 4.5H24.5V20.6H0Z" fill="#c8c8c6"/><path d="M6 10.3H20M6 15.6H20" stroke="#252722" stroke-width="2.4"/></svg>
<svg style="left:59.5px;top:1095.5px" width="24.2" height="18.1" viewBox="0 0 24.2 18.1"><path d="M6.8 1.2L9.5 0L12.1 1.6L14.7 0L17.4 1.2L21.5 10H2.7Z" fill="#8c8c8a"/><circle cx="5.6" cy="12.5" r="4.4" fill="#252722" stroke="#8c8c8a" stroke-width="2.4"/><circle cx="18.6" cy="12.5" r="4.4" fill="#252722" stroke="#8c8c8a" stroke-width="2.4"/><rect x="9.5" y="9" width="5.2" height="5" fill="#8c8c8a"/></svg>
<svg style="left:110px;top:1094.5px" width="20.5" height="20.8" viewBox="0 0 20.5 20.8" fill="none" stroke="#8c8c8a" stroke-width="1.7"><path d="M4.8 9.5C4.8 5 15.7 5 15.7 9.5V13.5C15.7 21 4.8 21 4.8 13.5Z"/><path d="M10.25 6.5V19"/><path d="M7.2 5.8C7.2 1 13.3 1 13.3 5.8"/><path d="M4.8 8.5L1.5 6.5L0.8 3M4.8 12H0.5M4.8 15.5L1.8 17L0.8 20.3M15.7 8.5L19 6.5L19.7 3M15.7 12H20M15.7 15.5L18.7 17L19.7 20.3"/></svg>
<svg style="left:157.2px;top:1094.5px" width="23.8" height="20.5" viewBox="0 0 23.8 20.5" fill="none" stroke="#8c8c8a" stroke-width="1.6"><path d="M14.5 1.6A9.4 9.4 0 1 0 14.5 18.9"/><path d="M15 5H21M18.5 2.8L21 5L18.5 7.2M10.5 10.2H16.5M14.3 8.2L16.7 10.2L14.3 12.2M8.5 15.5H23M20.3 13L23 15.5L20.3 18"/></svg>
<svg style="left:205.6px;top:1094.5px" width="24.4" height="20.5" viewBox="0 0 24.4 20.5" fill="none" stroke="#8c8c8a" stroke-width="1.6"><path d="M19 6.5A9.2 9.2 0 1 0 8.5 19.3"/><path d="M10 1C5.5 5.5 5.5 14 8 18.5M1 10.2H12M10 1C12 3 13 5 13.5 7"/><path d="M12.5 19.6H21A2.8 2.8 0 0 0 21 14A4 4 0 0 0 13.5 13.5A3.1 3.1 0 0 0 12.5 19.6Z" fill="#252722"/></svg>
<div id="status">
<svg style="left:42.8px;top:9px" width="21" height="21" viewBox="0 0 21 21"><circle cx="10.5" cy="10.5" r="9.6" fill="none" stroke="#bdbdbd" stroke-width="1.7"/><ellipse cx="10.5" cy="8" rx="3.3" ry="4" fill="#bdbdbd"/><path d="M3 16.6C4 13.8 8 13.6 9.3 11.5H11.7C13 13.6 17 13.8 18 16.6A9.4 9.4 0 0 1 3 16.6Z" fill="#bdbdbd"/></svg>
<span style="left:74px;letter-spacing:-0.5px">247293991@qq.com</span>
<svg style="left:351.7px;top:11.3px" width="19" height="16.6" viewBox="0 0 19 16.6" fill="none" stroke="#e0e0e0" stroke-width="1.3"><rect x="0.7" y="0.7" width="3.2" height="3.2"/><rect x="0.7" y="6.7" width="3.2" height="3.2"/><rect x="0.7" y="12.7" width="3.2" height="3.2"/><path d="M6.5 2.3H19M6.5 8.3H19M6.5 14.3H19" stroke-width="1.5"/></svg>
<svg style="left:402.9px;top:11px" width="20.4" height="16.6" viewBox="0 0 20.4 16.6" fill="none" stroke="#e0e0e0" stroke-width="1.4"><rect x="0.7" y="0.7" width="19" height="15.2"/><path d="M4.5 5L8.3 8.3L4.5 11.6M10.5 12H14.5"/></svg>
<span style="left:1935.5px;top:-1px;font-family:'Noto Sans CJK SC';font-size:18.3px;-webkit-text-stroke:0">语法提示库</span>
<span style="left:2066.5px;top:-1.2px"><span style="position:static;font-family:'Noto Sans CJK SC';-webkit-text-stroke:0">行</span>:13</span>
<span style="left:2133.5px;top:-1.2px"><span style="position:static;font-family:'Noto Sans CJK SC';-webkit-text-stroke:0">列</span>:9</span>
<span style="left:2212.5px">UTF-8</span>
<span style="left:2309px">HTML</span>
<svg style="left:2389.6px;top:10.3px" width="21" height="19.6" viewBox="0 0 21 19.6"><path d="M9.5 0C15.5 0 20.3 3.6 20.3 8.3C20.3 11 19 13.2 16.8 14.7L20.5 19.3L12.5 16.4C11.5 16.6 10.5 16.7 9.5 16.7C4 16.7 0 13 0 8.3C0 3.6 4 0 9.5 0Z" fill="#e6e6e6"/><path d="M6 3.6V12.4H15V3.6" fill="none" stroke="#525252" stroke-width="1.9"/></svg>
<span style="left:2415.5px;top:3.2px;font-size:21px;-webkit-text-stroke:.3px #e4e4e4;transform:scaleX(.88);transform-origin:left center">55</span>
<svg style="left:2454.8px;top:7.5px" width="24.2" height="24.2" viewBox="0 0 24.2 24.2"><circle cx="12.1" cy="12.1" r="12.1" fill="#fff"/><path d="M12.1 5.8V17.5M7.6 13L12.1 17.8L16.6 13" fill="none" stroke="#4e4e4e" stroke-width="2.1"/></svg>
<svg style="left:2501.8px;top:9.4px" width="18.4" height="20.2" viewBox="0 0 19 21"><path d="M9.5 0.5C10.6 0.5 11 1.3 11 2.2C14.5 3 15.8 6 15.8 9.5C15.8 13.5 17 14.8 18.6 16.2V17.4H0.4V16.2C2 14.8 3.2 13.5 3.2 9.5C3.2 6 4.5 3 8 2.2C8 1.3 8.4 0.5 9.5 0.5Z" fill="#b5a47c"/><path d="M7 18.6H12A2.5 2.5 0 0 1 7 18.6Z" fill="#b5a47c"/></svg>
</div>
<div id="frame"></div></div></body></html>
